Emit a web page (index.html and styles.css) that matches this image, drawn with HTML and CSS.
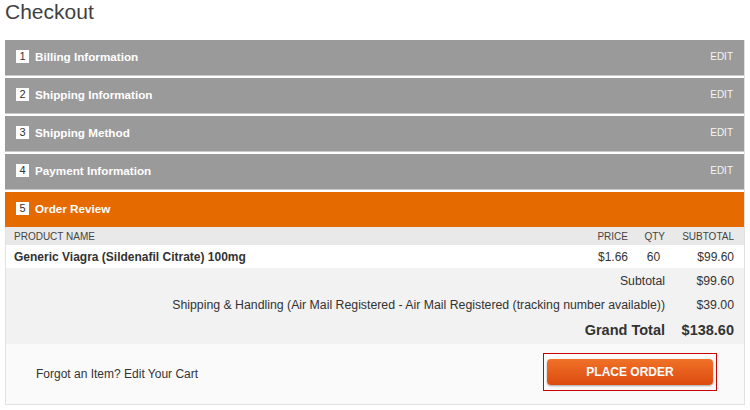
FILE: index.html
```html
<!DOCTYPE html>
<html>
<head>
<meta charset="utf-8">
<link rel="stylesheet" href="styles.css">
</head>
<body>
<h1 class="title">Checkout</h1>
<div class="panel">
  <div class="step">
    <span class="num">1</span><span class="label">Billing Information</span><span class="edit">EDIT</span>
  </div>
  <div class="step">
    <span class="num">2</span><span class="label">Shipping Information</span><span class="edit">EDIT</span>
  </div>
  <div class="step">
    <span class="num">3</span><span class="label">Shipping Method</span><span class="edit">EDIT</span>
  </div>
  <div class="step">
    <span class="num">4</span><span class="label">Payment Information</span><span class="edit">EDIT</span>
  </div>
  <div class="step active">
    <span class="num">5</span><span class="label">Order Review</span>
  </div>
  <div class="review">
    <div class="row head">
      <span class="c-name">PRODUCT NAME</span>
      <span class="c-price">PRICE</span>
      <span class="c-qty">QTY</span>
      <span class="c-sub">SUBTOTAL</span>
    </div>
    <div class="row item">
      <span class="c-name">Generic Viagra (Sildenafil Citrate) 100mg</span>
      <span class="c-price">$1.66</span>
      <span class="c-qty">60</span>
      <span class="c-sub">$99.60</span>
    </div>
    <div class="totals">
      <div class="trow"><span class="tlabel">Subtotal</span><span class="tval">$99.60</span></div>
      <div class="trow"><span class="tlabel">Shipping &amp; Handling (Air Mail Registered - Air Mail Registered (tracking number available))</span><span class="tval">$39.00</span></div>
      <div class="trow grand"><span class="tlabel">Grand Total</span><span class="tval">$138.60</span></div>
    </div>
    <div class="footer">
      <span class="forgot">Forgot an Item? Edit Your Cart</span>
      <div class="btn-wrap"><button class="btn">PLACE ORDER</button></div>
    </div>
  </div>
</div>
</body>
</html>
```
FILE: styles.css
```css
html, body {
  margin: 0;
  padding: 0;
  background: #fff;
  font-family: "Liberation Sans", Arial, sans-serif;
}
.title {
  margin: 0;
  padding: 0 0 0 5px;
  height: 40px;
  font-size: 21px;
  font-weight: normal;
  line-height: 24px;
  color: #3f3f3f;
}
.panel {
  margin-left: 5px;
  width: 739px;
  border-right: 1px solid #e2e2e2;
  border-bottom: 1px solid #e2e2e2;
}
.step {
  display: flex;
  align-items: center;
  height: 36px;
  margin-bottom: 2px;
  background: #9a9a9a;
  border-bottom: 1px solid #c8c8c8;
  box-sizing: border-box;
  padding: 0 11px 2px 11px;
  color: #fff;
}
.step.active {
  background: #e56b00;
  height: 35px;
  margin-bottom: 0;
  border-bottom: none;
  padding-bottom: 3px;
}
.num {
  width: 13px;
  height: 13px;
  background: #fff;
  color: #333;
  font-size: 11px;
  line-height: 13px;
  text-align: center;
  margin-right: 6px;
}
.label {
  flex: 1;
  font-size: 11.7px;
  font-weight: bold;
}
.edit {
  font-size: 10px;
  color: #f6f6f6;
}
.review {
  background: #fafafa;
  border-left: 1px solid #e2e2e2;
}
.row {
  display: flex;
  align-items: center;
  padding: 0 10px 0 8px;
}
.row.head {
  height: 18px;
  background: #e9e9e9;
  font-size: 10px;
  color: #444;
}
.row.item {
  height: 23px;
  background: #fff;
  font-size: 12px;
  color: #333;
}
.row.item .c-name {
  font-weight: bold;
}
.c-name { flex: 1; }
.c-price { width: 60px; text-align: right; }
.c-qty { width: 37px; text-align: right; }
.c-sub { width: 69px; text-align: right; }
.row.item .c-qty { text-align: center; padding-left: 14px; box-sizing: border-box; }
.totals {
  background: #f2f2f2;
  padding: 1px 0 0;
}
.trow {
  display: flex;
  justify-content: flex-end;
  align-items: center;
  height: 24px;
  font-size: 12.3px;
  color: #333;
  padding-right: 10px;
}
.tlabel {
  text-align: right;
}
.tval {
  width: 69px;
  text-align: right;
}
.trow.grand {
  height: 26px;
  font-size: 14.5px;
  font-weight: bold;
  padding-bottom: 1px;
}
.footer {
  display: flex;
  align-items: center;
  justify-content: space-between;
  height: 60px;
  padding: 0 27px 0 30px;
  background: #fafafa;
}
.forgot {
  font-size: 12px;
  color: #333;
}
.btn-wrap {
  border: 1px solid #cc0000;
  padding: 5px 3px;
  margin-bottom: 4px;
}
.btn {
  display: block;
  width: 166px;
  height: 26px;
  border: none;
  border-radius: 4px;
  background: linear-gradient(#f07228, #dc4a10);
  box-shadow: 0 1px 2px rgba(0,0,0,0.35);
  color: #fff;
  font-family: "Liberation Sans", Arial, sans-serif;
  font-size: 12px;
  font-weight: bold;
  padding: 0;
}
```
